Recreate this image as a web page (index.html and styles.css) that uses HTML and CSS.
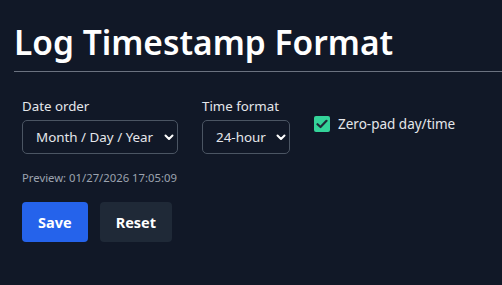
FILE: index.html
```html
<!DOCTYPE html>
<html lang="en">
<head>
<meta charset="utf-8">
<title>Log Timestamp Format</title>
<link rel="stylesheet" href="styles.css">
</head>
<body>
<h1 class="title">Log Timestamp Format</h1>
<hr class="rule">
<form class="form">
  <div class="fields">
    <label class="field">
      <span class="field-label">Date order</span>
      <span class="select-wrap select-date">
        <select class="select"><option>Month / Day / Year</option></select>
        <svg class="chev" width="10" height="7" viewBox="0 0 10 7"><path d="M1.5 1.5 L5 5 L8.5 1.5" fill="none" stroke="#fff" stroke-width="2" stroke-linecap="round" stroke-linejoin="round"/></svg>
      </span>
    </label>
    <label class="field">
      <span class="field-label">Time format</span>
      <span class="select-wrap select-time">
        <select class="select"><option>24-hour</option></select>
        <svg class="chev" width="10" height="7" viewBox="0 0 10 7"><path d="M1.5 1.5 L5 5 L8.5 1.5" fill="none" stroke="#fff" stroke-width="2" stroke-linecap="round" stroke-linejoin="round"/></svg>
      </span>
    </label>
    <label class="check">
      <span class="box"><svg width="12" height="10" viewBox="0 0 12 10"><path d="M1.5 5.2 L4.5 8 L10.5 1.8" fill="none" stroke="#1f2937" stroke-width="2.2" stroke-linecap="round" stroke-linejoin="round"/></svg></span>
      <span class="check-label">Zero-pad day/time</span>
    </label>
  </div>
  <p class="preview">Preview: 01/27/2026 17:05:09</p>
  <div class="actions">
    <button type="button" class="btn btn-primary">Save</button>
    <button type="button" class="btn btn-secondary">Reset</button>
  </div>
</form>
</body>
</html>
```
FILE: styles.css
```css
html, body {
  margin: 0;
  background: #111827;
}
body {
  padding: 20px 0 0 14px;
  font-family: "Noto Sans", "Open Sans", sans-serif;
  color: #e5e7eb;
  overflow: hidden;
}
.title {
  margin: 0;
  font-size: 33.5px;
  line-height: 44px;
  font-weight: 600;
  color: #ffffff;
}
.rule {
  margin: 7px 0 0 0;
  border: 0;
  height: 1px;
  background: #6b7280;
}
.form {
  padding: 24px 0 0 8px;
}
.fields {
  display: flex;
  align-items: center;
  gap: 24px;
}
.field {
  display: flex;
  flex-direction: column;
  gap: 4px;
}
.field-label {
  font-size: 13.3px;
  line-height: 20px;
  color: #e5e7eb;
}
.select-wrap {
  position: relative;
  display: block;
  height: 34px;
}
.select-date { width: 156px; }
.select-time { width: 88px; }
.select {
  appearance: none;
  -webkit-appearance: none;
  width: 100%;
  height: 34px;
  margin: 0;
  padding: 0 0 0 13px;
  box-sizing: border-box;
  background: #111827;
  border: 1px solid #4b5563;
  border-radius: 5px;
  color: #e5e7eb;
  font-family: inherit;
  font-size: 13.4px;
}
.chev {
  position: absolute;
  right: 4px;
  top: 14px;
  pointer-events: none;
}
.check {
  display: flex;
  align-items: center;
  gap: 8px;
  margin-top: -2px;
}
.box {
  width: 16px;
  height: 16px;
  border-radius: 2px;
  background: #34d399;
  display: flex;
  align-items: center;
  justify-content: center;
}
.check-label {
  font-size: 13.5px;
  line-height: 20px;
  color: #e5e7eb;
}
.preview {
  margin: 16px 0 0 0;
  font-size: 11.3px;
  line-height: 16px;
  color: #9ca3af;
}
.actions {
  display: flex;
  gap: 12px;
  margin-top: 16px;
}
.btn {
  height: 40px;
  padding: 0 16px;
  border: 0;
  border-radius: 4px;
  font-family: inherit;
  font-size: 14.5px;
  font-weight: 700;
  color: #ffffff;
}
.btn-primary { background: #2563eb; }
.btn-secondary { background: #1f2937; }
```
